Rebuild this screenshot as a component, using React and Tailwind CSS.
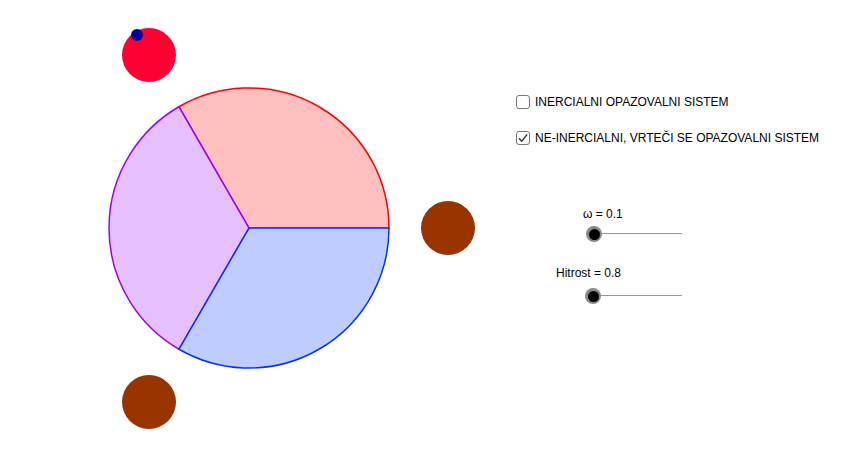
import React from "react";

function Drawing() {
  const cx = 249, cy = 228, r = 140;
  const p = (deg) => [cx + r * Math.cos((deg * Math.PI) / 180), cy - r * Math.sin((deg * Math.PI) / 180)];
  const sector = (a, b) => {
    const [x1, y1] = p(a);
    const [x2, y2] = p(b);
    return `M ${cx} ${cy} L ${x1} ${y1} A ${r} ${r} 0 0 0 ${x2} ${y2} Z`;
  };
  return (
    <svg width="516" height="470" className="shrink-0 block">
      <path d={sector(0, 120)} fill="#ffbfbf" stroke="#ff0000" strokeWidth="1.5" />
      <path d={sector(120, 240)} fill="#e6bfff" stroke="#9900ff" strokeWidth="1.5" />
      <path d={sector(240, 360)} fill="#bfccff" stroke="#0033ff" strokeWidth="1.5" />
      <circle cx="149" cy="55" r="27" fill="#ff0033" />
      <circle cx="137" cy="35" r="6" fill="#000099" />
      <circle cx="448" cy="228" r="27" fill="#993300" />
      <circle cx="149" cy="402" r="27" fill="#993300" />
    </svg>
  );
}

const font = { fontFamily: '"Liberation Sans", Arial, sans-serif' };

function Check({ checked, label }) {
  return (
    <div className="flex items-center h-[14px] gap-[5px]">
      <div className="w-[14px] h-[14px] rounded-[3px] border border-[#777] bg-white flex items-center justify-center">
        {checked && (
          <svg width="12" height="12" viewBox="0 0 12 12">
            <path d="M2 6.2 L4.8 9.2 L10.2 2.4" fill="none" stroke="#333" strokeWidth="1.5" />
          </svg>
        )}
      </div>
      <span className="text-[12px] leading-none text-black whitespace-nowrap" style={font}>{label}</span>
    </div>
  );
}

function Slider({ label, labelLeft, lineLeft, lineWidth, knobX, gap }) {
  return (
    <div className="flex flex-col">
      <div className="text-[12px] leading-none text-black whitespace-nowrap h-[12px]" style={{ ...font, marginLeft: labelLeft }}>{label}</div>
      <div className="relative h-[16px]" style={{ marginLeft: lineLeft, width: lineWidth, marginTop: gap }}>
        <div className="absolute left-0 right-0 top-[7px] h-px bg-[#999]" />
        <div className="absolute top-0 w-[16px] h-[16px] rounded-full bg-[#8a8a8a] flex items-center justify-center" style={{ left: knobX - 8 }}>
          <div className="w-[11px] h-[11px] rounded-full bg-black" />
        </div>
      </div>
    </div>
  );
}

export default function App() {
  return (
    <div className="w-[842px] h-[470px] bg-white flex overflow-hidden">
      <Drawing />
      <div className="flex flex-col pt-[95px]">
        <Check checked={false} label="INERCIALNI OPAZOVALNI SISTEM" />
        <div className="h-[22px]" />
        <Check checked={true} label="NE-INERCIALNI, VRTEČI SE OPAZOVALNI SISTEM" />
        <div className="h-[63px]" />
        <Slider label="ω = 0.1" labelLeft={67} lineLeft={70} lineWidth={96} knobX={8} gap={6} />
        <div className="h-[25px]" />
        <Slider label="Hitrost = 0.8" labelLeft={40} lineLeft={69} lineWidth={97} knobX={8} gap={9} />
      </div>
    </div>
  );
}
